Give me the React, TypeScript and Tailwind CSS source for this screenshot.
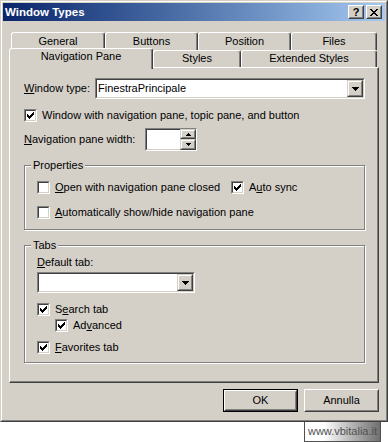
import React from "react";

const CHECK =
  "M6 0h1v1h-1z M5 1h2v1h-2z M0 2h1v1h-1z M4 2h3v1h-3z M0 3h2v1h-2z M3 3h3v1h-3z M0 4h5v1h-5z M1 5h3v1h-3z M2 6h1v1h-1z";
const CLOSE =
  "M0 0h2v1h-2z M6 0h2v1h-2z M1 1h2v1h-2z M5 1h2v1h-2z M2 2h4v1h-4z M3 3h2v1h-2z M2 4h4v1h-4z M1 5h2v1h-2z M5 5h2v1h-2z M0 6h2v1h-2z M6 6h2v1h-2z";
const DOWN = "M0 0h7v1h-7z M1 1h5v1h-5z M2 2h3v1h-3z M3 3h1v1h-1z";
const UP_S = "M2 0h1v1h-1z M1 1h3v1h-3z M0 2h5v1h-5z";
const DOWN_S = "M0 0h5v1h-5z M1 1h3v1h-3z M2 2h1v1h-1z";

function Pix({ d, w, h }: { d: string; w: number; h: number }) {
  return (
    <svg width={w} height={h} viewBox={`0 0 ${w} ${h}`} shapeRendering="crispEdges" className="block">
      <path d={d} fill="#000" />
    </svg>
  );
}

function RaisedCtl({ className = "", children }: { className?: string; children?: React.ReactNode }) {
  return (
    <div className={`shrink-0 border border-t-[#d4d0c8] border-l-[#d4d0c8] border-r-[#404040] border-b-[#404040] ${className}`}>
      <div className="w-full h-full border border-t-white border-l-white border-r-[#808080] border-b-[#808080] bg-[#d4d0c8] flex items-center justify-center">
        {children}
      </div>
    </div>
  );
}

function CaptionBtn({ children }: { children: React.ReactNode }) {
  return (
    <div className="w-[16px] h-[14px] border border-t-white border-l-white border-r-[#404040] border-b-[#404040]">
      <div className="w-full h-full border border-t-[#d4d0c8] border-l-[#d4d0c8] border-r-[#808080] border-b-[#808080] bg-[#d4d0c8] flex items-center justify-center">
        {children}
      </div>
    </div>
  );
}

function U({ children }: { children: React.ReactNode }) {
  return <span className="underline decoration-1 underline-offset-[1px]">{children}</span>;
}

function CheckBox({ checked }: { checked?: boolean }) {
  return (
    <div className="w-[13px] h-[13px] shrink-0 border border-t-[#808080] border-l-[#808080] border-r-white border-b-white">
      <div className="relative w-full h-full border border-t-[#404040] border-l-[#404040] border-r-[#d4d0c8] border-b-[#d4d0c8] bg-white">
        {checked && (
          <div className="absolute left-[1px] top-[1px]">
            <Pix d={CHECK} w={7} h={7} />
          </div>
        )}
      </div>
    </div>
  );
}

function CB({ checked, children, className = "" }: { checked?: boolean; children: React.ReactNode; className?: string }) {
  return (
    <div className={`flex items-center h-[13px] ${className}`}>
      <CheckBox checked={checked} />
      <span className="ml-[5px] whitespace-nowrap">{children}</span>
    </div>
  );
}

function Combo({ w, text }: { w: string; text?: string }) {
  return (
    <div className={`${w} h-[21px] shrink-0 border border-t-[#808080] border-l-[#808080] border-r-white border-b-white`}>
      <div className="h-full border border-t-[#404040] border-l-[#404040] border-r-[#d4d0c8] border-b-[#d4d0c8] bg-white flex items-stretch">
        <div className="flex-1 flex items-center pl-[1px] whitespace-nowrap">{text}</div>
        <RaisedCtl className="w-[16px]">
          <Pix d={DOWN} w={7} h={4} />
        </RaisedCtl>
      </div>
    </div>
  );
}

function Group({ label, className = "", children }: { label: string; className?: string; children: React.ReactNode }) {
  return (
    <div className={`relative w-[341px] border border-[#808080] shadow-[1px_1px_0_#ffffff,inset_1px_1px_0_#ffffff] ${className}`}>
      <span className="absolute left-[6px] -top-[7px] bg-[#d4d0c8] px-[2px] leading-[13px]">{label}</span>
      {children}
    </div>
  );
}

const tabBase =
  "bg-[#d4d0c8] border-t border-l border-r border-t-white border-l-white border-r-[#404040] shadow-[inset_-1px_0_0_#808080] rounded-t-[3px] flex items-center justify-center whitespace-nowrap shrink-0";

export default function App() {
  return (
    <div className="w-[388px] h-[442px] bg-white font-['Liberation_Sans',Arial,sans-serif] text-[11px] leading-[13px] text-black">
      <div className="w-[388px] h-[422px] border border-t-[#d4d0c8] border-l-[#d4d0c8] border-r-[#404040] border-b-[#404040]">
        <div className="h-full border border-t-white border-l-white border-r-[#808080] border-b-[#808080] p-px bg-[#d4d0c8] flex flex-col">
          {/* Title bar */}
          <div className="h-[18px] shrink-0 flex items-center bg-linear-to-r from-[#0a246a] to-[#a6caf0] pl-[2px] pr-[3px]">
            <span className="text-white font-bold text-[11.5px]">Window Types</span>
            <div className="ml-auto flex gap-[2px]">
              <CaptionBtn>
                <span className="font-bold text-[11px] leading-[10px]">?</span>
              </CaptionBtn>
              <CaptionBtn>
                <Pix d={CLOSE} w={8} h={7} />
              </CaptionBtn>
            </div>
          </div>

          {/* Tab control */}
          <div className="mt-[11px] mx-[6px]">
            <div className="flex pl-[2px] h-[18px]">
              <div className={`${tabBase} w-[94px] h-[18px]`}>General</div>
              <div className={`${tabBase} w-[93px] h-[18px]`}>Buttons</div>
              <div className={`${tabBase} w-[93px] h-[18px]`}>Position</div>
              <div className={`${tabBase} w-[86px] h-[18px]`}>Files</div>
            </div>
            <div className="flex items-start h-[19px] -mt-[2px]">
              <div className={`${tabBase} relative z-10 w-[144px] h-[21px] pb-[5px]`}>Navigation Pane</div>
              <div className={`${tabBase} w-[88px] h-[17px] mt-[2px] pb-[2px]`}>Styles</div>
              <div className={`${tabBase} w-[136px] h-[17px] mt-[2px] pb-[2px]`}>Extended Styles</div>
            </div>
            <div className="h-[316px] border border-t-white border-l-white border-r-[#404040] border-b-[#404040] shadow-[inset_-1px_-1px_0_#808080] pt-[10px] pl-[14px]">
              <div className="flex items-center h-[21px]">
                <span className="w-[71px] shrink-0 whitespace-nowrap">
                  <U>W</U>indow type:
                </span>
                <Combo w="w-[270px]" text="FinestraPrincipale" />
              </div>

              <CB checked className="mt-[10px]">
                Window with navigation pane, topic pane, and button
              </CB>

              <div className="flex items-center h-[23px] mt-[6px]">
                <span className="w-[121px] shrink-0 whitespace-nowrap">
                  <U>N</U>avigation pane width:
                </span>
                <div className="w-[52px] h-[23px] flex border border-t-[#808080] border-l-[#808080] border-r-white border-b-white">
                  <div className="flex-1 border-t border-l border-b border-t-[#404040] border-l-[#404040] border-b-[#d4d0c8] bg-white" />
                  <div className="w-[16px] flex flex-col">
                    <RaisedCtl className="h-[10px]">
                      <Pix d={UP_S} w={5} h={3} />
                    </RaisedCtl>
                    <RaisedCtl className="h-[11px]">
                      <Pix d={DOWN_S} w={5} h={3} />
                    </RaisedCtl>
                  </div>
                </div>
              </div>

              <Group label="Properties" className="mt-[14px] h-[65px] pt-[15px] pl-[12px]">
                <div className="flex">
                  <CB className="w-[194px]">
                    <U>O</U>pen with navigation pane closed
                  </CB>
                  <CB checked>
                    A<U>u</U>to sync
                  </CB>
                </div>
                <CB className="mt-[12px]">
                  <U>A</U>utomatically show/hide navigation pane
                </CB>
              </Group>

              <Group label="Tabs" className="mt-[15px] h-[118px] pt-[10px] pl-[12px]">
                <div className="h-[13px] whitespace-nowrap">
                  <U>D</U>efault tab:
                </div>
                <div className="mt-[3px]">
                  <Combo w="w-[158px]" />
                </div>
                <CB checked className="mt-[10px]">
                  S<U>e</U>arch tab
                </CB>
                <CB checked className="mt-[3px] ml-[18px]">
                  Ad<U>v</U>anced
                </CB>
                <CB checked className="mt-[9px]">
                  <U>F</U>avorites tab
                </CB>
              </Group>
            </div>
          </div>

          {/* Buttons */}
          <div className="mt-[6px] mr-[6px] flex justify-end gap-[6px]">
            <div className="w-[75px] h-[23px] border border-black">
              <div className="h-full border border-t-white border-l-white border-r-[#404040] border-b-[#404040]">
                <div className="h-full border border-t-[#d4d0c8] border-l-[#d4d0c8] border-r-[#808080] border-b-[#808080] flex items-center justify-center">
                  OK
                </div>
              </div>
            </div>
            <div className="w-[75px] h-[23px] border border-t-white border-l-white border-r-[#404040] border-b-[#404040]">
              <div className="h-full border border-t-[#d4d0c8] border-l-[#d4d0c8] border-r-[#808080] border-b-[#808080] flex items-center justify-center">
                Annulla
              </div>
            </div>
          </div>
        </div>
      </div>

      {/* Watermark */}
      <div className="ml-[304px] w-[77px] h-[20px] border-l border-r border-b border-[#505050] bg-linear-to-r from-white from-25% to-[#707070] flex items-center justify-center text-[#505050] text-[11px] whitespace-nowrap">
        www.vbitalia.it
      </div>
    </div>
  );
}
